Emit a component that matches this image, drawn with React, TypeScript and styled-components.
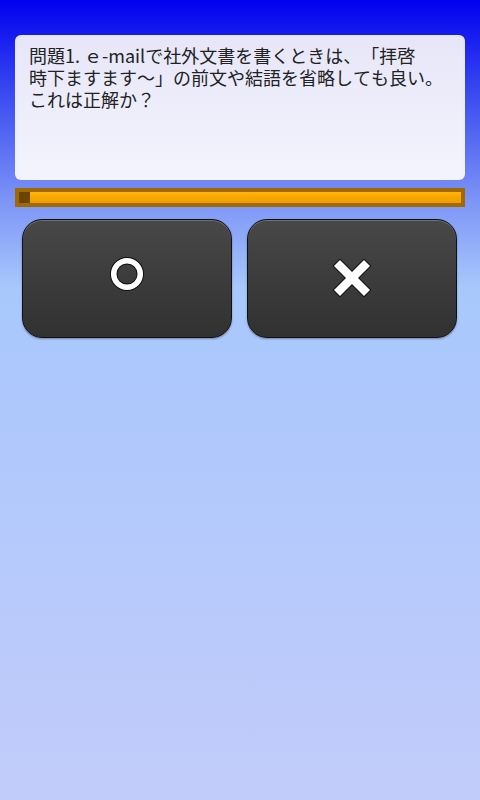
import React from 'react';
import styled, { createGlobalStyle } from 'styled-components';

const PROGRESS = 0;

const GlobalStyle = createGlobalStyle`
    html,
    body {
        margin: 0;
        padding: 0;
    }

    body {
        font-family: 'Noto Sans CJK JP', 'Noto Sans', sans-serif;
    }
`;

const Screen = styled.div`
    box-sizing: border-box;
    min-height: 800px;
    padding: 35px 15px 0;
    background: linear-gradient(
        180deg,
        #0000ee 0%,
        #3c4cf0 12%,
        #7c94f6 25%,
        #a8c8fc 36%,
        #b0c8fc 55%,
        #c2ccfa 100%
    );
`;

const QuestionCard = styled.div`
    box-sizing: border-box;
    height: 145px;
    padding: 9px 14px;
    border-radius: 6px;
    background: linear-gradient(180deg, #e6e6f8 0%, #f4f4fe 100%);
`;

const QuestionText = styled.p`
    margin: 0;
    color: #222;
    font-size: 18px;
    line-height: 22px;
    white-space: pre-line;
    text-spacing-trim: space-all;
    font-kerning: none;
`;

const ProgressTrack = styled.div`
    box-sizing: border-box;
    display: flex;
    height: 19px;
    margin-top: 8px;
    padding: 4px;
    background: #a06a00;
`;

const ProgressFill = styled.div`
    position: relative;
    flex: 1;
    background: linear-gradient(180deg, #ffb612 0%, #f8a800 45%, #ee9e00 100%);
`;

const ProgressMarker = styled.div`
    position: absolute;
    top: 0;
    bottom: 0;
    width: 11px;
    background: #6a4400;
`;

const ButtonRow = styled.div`
    display: grid;
    grid-template-columns: 1fr 1fr;
    gap: 15px;
    margin: 12px 8px 0 7px;
`;

const AnswerButton = styled.button<{ $shift?: number }>`
    box-sizing: border-box;
    display: flex;
    align-items: center;
    justify-content: center;
    height: 119px;
    padding: 0 0 ${p => p.$shift ?? 0}px;
    border: 1.5px solid #111;
    border-radius: 20px;
    background: linear-gradient(180deg, #484848 0%, #3c3c3c 50%, #313131 100%);
    box-shadow: 0 1px 2px rgba(0, 0, 0, 0.35), inset 0 1px 0 rgba(255, 255, 255, 0.22);
    cursor: pointer;
`;

const CircleIcon = () => (
    <svg width="36" height="36" viewBox="0 0 36 36">
        <circle cx="18" cy="18" r="13.3" fill="none" stroke="#111" strokeWidth="7.5" />
        <circle cx="18" cy="18" r="13.3" fill="none" stroke="#fff" strokeWidth="5.5" />
    </svg>
);

const CrossIcon = () => (
    <svg width="38" height="38" viewBox="0 0 38 38">
        <g stroke="#111" strokeWidth="10.5" strokeLinecap="square">
            <line x1="7" y1="7" x2="31" y2="31" />
            <line x1="31" y1="7" x2="7" y2="31" />
        </g>
        <g stroke="#fff" strokeWidth="8.5" strokeLinecap="square">
            <line x1="7" y1="7" x2="31" y2="31" />
            <line x1="31" y1="7" x2="7" y2="31" />
        </g>
    </svg>
);

const question = '問題1. ｅ-mailで社外文書を書くときは、「拝啓\n時下ますます～」の前文や結語を省略しても良い。\nこれは正解か？';

export default function App() {
    return (
        <Screen>
            <GlobalStyle />
            <QuestionCard>
                <QuestionText>{question}</QuestionText>
            </QuestionCard>
            <ProgressTrack>
                <ProgressFill>
                    <ProgressMarker style={{ left: `${PROGRESS}%` }} />
                </ProgressFill>
            </ProgressTrack>
            <ButtonRow>
                <AnswerButton $shift={9} aria-label="正解">
                    <CircleIcon />
                </AnswerButton>
                <AnswerButton $shift={2} aria-label="不正解">
                    <CrossIcon />
                </AnswerButton>
            </ButtonRow>
        </Screen>
    );
}
